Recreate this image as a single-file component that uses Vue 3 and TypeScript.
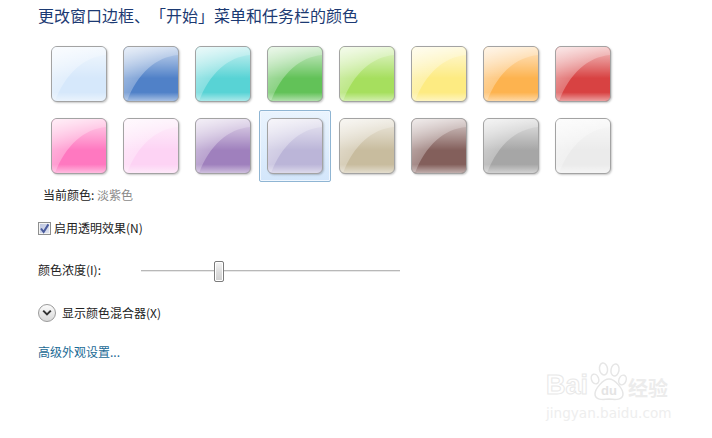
<script setup lang="ts">
const colors: string[] = [
  '#d6e8fb', '#5081c8', '#58d3d5', '#62c258', '#a6df5e', '#fdeb82', '#fdb34f', '#d84242',
  '#ff78c0', '#fdd3f4', '#9f80bd', '#bbb5d8', '#c8bc9e', '#835f5b', '#a6a6a6', '#ebebeb',
]
const selected = 11
const opacity = 28.2
</script>

<template>
  <main class="page">
    <h1 class="title">更改窗口边框、「开始」菜单和任务栏的颜色</h1>

    <div class="swatches">
      <div v-for="(color, i) in colors" :key="color" class="cell" :class="{ selected: i === selected }">
        <div class="swatch" :style="{ backgroundColor: color }"></div>
      </div>
    </div>

    <p class="current">当前颜色: <span class="current-name">淡紫色</span></p>

    <label class="check-row">
      <span class="checkbox">
        <svg width="11" height="11" viewBox="0 0 11 11">
          <path d="M2 5.5 L4.6 9 L9.4 1.4" fill="none" stroke="#4a5b9c" stroke-width="2" />
        </svg>
      </span>
      启用透明效果(N)
    </label>

    <div class="slider-row">
      <span class="slider-label">颜色浓度(I):</span>
      <div class="slider">
        <div class="thumb" :style="{ left: opacity + '%' }"></div>
      </div>
    </div>

    <div class="mixer-row">
      <span class="chevron">
        <svg width="10" height="8" viewBox="0 0 10 8">
          <path d="M1.2 1.6 L5 5.4 L8.8 1.6" fill="none" stroke="#333" stroke-width="2" />
        </svg>
      </span>
      显示颜色混合器(X)
    </div>

    <a class="link">高级外观设置...</a>

    <div class="watermark">
      <div class="wm-logo">
        <span class="wm-bai">Bai</span>
        <svg class="wm-paw" width="38" height="40" viewBox="0 0 38 40">
          <g fill="#fff" stroke="#e6e6e6" stroke-width="1.5">
            <ellipse cx="5" cy="17" rx="3.6" ry="5" transform="rotate(-20 5 17)" />
            <ellipse cx="13.5" cy="7" rx="4" ry="6" transform="rotate(-8 13.5 7)" />
            <ellipse cx="25" cy="8" rx="4" ry="6" transform="rotate(10 25 8)" />
            <ellipse cx="32.5" cy="18" rx="3.6" ry="5" transform="rotate(20 32.5 18)" />
            <path d="M19 17 C13 17 5 27 5 32 C5 38 12 38 19 37 C26 38 33 38 33 32 C33 27 25 17 19 17 Z" />
          </g>
          <text x="19" y="33" text-anchor="middle" class="wm-du">du</text>
        </svg>
        <span class="wm-cn">经验</span>
      </div>
      <div class="wm-url">jingyan.baidu.com</div>
    </div>
  </main>
</template>

<style>
html,
body {
  background: #fff;
}
</style>

<style scoped>
.page {
  position: relative;
  width: 712px;
  height: 438px;
  box-sizing: border-box;
  padding: 5px 0 0 38px;
  overflow: hidden;
  font-family: "Noto Sans CJK SC", "Liberation Sans", sans-serif;
  font-size: 12px;
  line-height: 18px;
  color: #222;
  text-spacing-trim: space-all;
}

.title {
  margin: 0;
  font-size: 16px;
  line-height: 20px;
  font-weight: 400;
  color: #1c3a73;
}

.swatches {
  display: grid;
  grid-template-columns: repeat(8, 72px);
  grid-auto-rows: 72px;
  margin: 13px 0 0 5px;
  width: 576px;
}

.cell {
  display: flex;
  align-items: center;
  justify-content: center;
  box-sizing: border-box;
}

.cell.selected {
  background: linear-gradient(#eaf4fe, #d3e6fb);
  border: 1px solid #8fb5d3;
  border-radius: 2px;
  box-shadow: inset 0 0 0 1px #f0f7ff;
}

.swatch {
  position: relative;
  width: 56px;
  height: 56px;
  box-sizing: border-box;
  border: 1px solid #a3a3a3;
  border-radius: 6px;
  box-shadow: 1px 1px 2px rgba(0, 0, 0, 0.22);
  overflow: hidden;
}

/* vertical sheen, light at the top and along the bottom edge */
.swatch::after {
  content: '';
  position: absolute;
  inset: 0;
  background: linear-gradient(
    to bottom,
    rgba(255, 255, 255, 0.68) 0%,
    rgba(255, 255, 255, 0.36) 28%,
    rgba(255, 255, 255, 0) 58%,
    rgba(255, 255, 255, 0) 84%,
    rgba(255, 255, 255, 0.5) 100%
  );
}

/* curved glass highlight in the top-left corner */
.swatch::before {
  content: '';
  position: absolute;
  inset: 0;
  z-index: 1;
  clip-path: path('M0 0 H54 V8 C32 10 14 26 3 54 H0 Z');
  background: linear-gradient(
    135deg,
    rgba(255, 255, 255, 0.62) 0%,
    rgba(255, 255, 255, 0.28) 45%,
    rgba(255, 255, 255, 0.14) 70%,
    rgba(255, 255, 255, 0.1) 100%
  );
}

.current {
  margin: 4px 0 0 5px;
}

.current-name {
  color: #8a8a8a;
}

.check-row {
  display: flex;
  align-items: center;
  gap: 3px;
  margin-top: 15px;
}

.checkbox {
  display: flex;
  align-items: center;
  justify-content: center;
  width: 13px;
  height: 13px;
  box-sizing: border-box;
  border: 1px solid #8e8f8f;
  background: linear-gradient(135deg, #b9c2dd, #e4e8f3);
  box-shadow: inset 0 0 0 1px #f4f4f4;
}

.slider-row {
  display: flex;
  align-items: center;
  margin-top: 23px;
  height: 22px;
}

.slider-label {
  width: 103px;
  margin-bottom: 2px;
}

.slider {
  position: relative;
  width: 259px;
  height: 1px;
  background: #b8b8b8;
  border-bottom: 1px solid #e8e8e8;
}

.thumb {
  position: absolute;
  top: -9px;
  width: 10px;
  height: 21px;
  box-sizing: border-box;
  border: 1px solid #7b7b7b;
  border-radius: 2px;
  background: linear-gradient(to bottom, #f6f6f6, #dcdcdc 55%, #cfcfcf);
  box-shadow: inset 0 0 0 1px #fff;
}

.mixer-row {
  display: flex;
  align-items: center;
  gap: 6px;
  margin-top: 21px;
  height: 20px;
}

.chevron {
  display: flex;
  align-items: center;
  justify-content: center;
  width: 18px;
  height: 18px;
  box-sizing: border-box;
  border: 1px solid #9a9a9a;
  border-radius: 50%;
  background: linear-gradient(to bottom, #fbfbfb, #d9d9d9);
}

.link {
  display: block;
  margin-top: 20px;
  color: #1a6a95;
}

.watermark {
  position: absolute;
  left: 546px;
  top: 362px;
  width: 130px;
  color: #e9e9e9;
}

.wm-logo {
  display: flex;
  align-items: flex-end;
  height: 40px;
}

.wm-bai {
  width: 44px;
  font-family: "Liberation Sans", sans-serif;
  font-size: 27px;
  line-height: 34px;
  font-weight: 700;
  color: #fff;
  -webkit-text-stroke: 1px #e8e8e8;
}

.wm-paw {
  flex: none;
}

.wm-du {
  font-family: "Liberation Sans", sans-serif;
  font-size: 13px;
  font-weight: 700;
  fill: #e4e4e4;
}

.wm-cn {
  font-size: 20px;
  line-height: 28px;
  font-weight: 700;
  color: #ececec;
}

.wm-url {
  margin-top: 3px;
  font-family: "DejaVu Sans", sans-serif;
  font-size: 13.6px;
  line-height: 16px;
  color: #eeeeee;
  white-space: nowrap;
}
</style>
